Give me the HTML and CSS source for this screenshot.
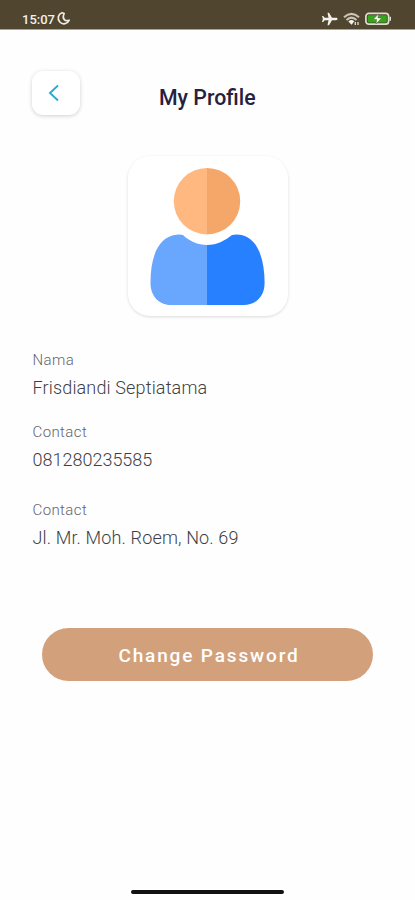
FILE: index.html
```html
<!DOCTYPE html>
<html lang="id">
<head>
  <meta charset="UTF-8" />
  <meta name="viewport" content="width=device-width, initial-scale=1.0"/>
  <title>My Profile</title>
  <link rel="stylesheet" href="styles.css">
</head>
<body>

  <div class="status-bar">
    <div class="status-left">
      <span class="time">15:07</span>
      <svg class="moon" width="15" height="15" viewBox="0 0 15 15">
        <path d="M6 1.700A5.700 5.700 0 1 0 13.200 9.200Q11 10.200 9 9.200Q6 7 8.200 2.500Z" fill="none" stroke="#eeebe3" stroke-width="1.700" stroke-linejoin="round"/>
      </svg>
    </div>
    <div class="status-right">
      <svg width="17" height="14" viewBox="0 0 17 14">
        <path d="M16.500 7c0-.8-.7-1.200-1.500-1.200h-4L8 .8H6.500l1 5H3.700L2.200 4H1l.9 3L1 10h1.200l1.500-1.800h3.800l-1 5H8l3-5h4c.8 0 1.500-.4 1.500-1.200z" fill="#f3f1ec"/>
      </svg>
      <svg width="17" height="14" viewBox="0 0 17 14">
        <path d="M1 5.200Q8.500-1.500 16 5.200M3.500 8Q8.500 3.300 13.500 8" fill="none" stroke="#c9c4b7" stroke-width="2.100"/>
        <path d="M5.300 9.400Q8.500 6.700 11.300 9.200L8.600 12.800Z" fill="#f3f1ec"/>
        <path d="M12.300 10v3M15 10v3" stroke="#d9d5ca" stroke-width="1.400"/>
      </svg>
      <svg class="battery" width="27" height="14" viewBox="0 0 27 14">
        <rect x=".9" y="1.400" width="22.700" height="10.800" rx="3" fill="#50452f" stroke="#dde0cf" stroke-width="1.700"/>
        <rect x="2.800" y="3.200" width="18.900" height="7.200" rx="1" fill="#35a51c"/>
        <path d="M24.500 4.800h1.500v4h-1.500z" fill="#dde0cf"/>
        <path d="M13.600 1.800L8.200 7.500h3.500l-.7 4.600 5.600-6.200h-3.600z" fill="#fff" stroke="#50602a" stroke-width=".5"/>
      </svg>
    </div>
  </div>

  <div class="header">
    <button class="back-btn" aria-label="Back">
      <svg width="12" height="18" viewBox="0 0 12 18">
        <path d="M10 1.500L2 9l8 7.500" fill="none" stroke="#2ba9d1" stroke-width="1.900"/>
      </svg>
    </button>
    <h1>My Profile</h1>
  </div>

  <div class="avatar">
    <svg width="116" height="138" viewBox="0 0 116 138">
      <path d="M57 0A33.200 33.200 0 0 0 57 66.400Z" fill="#ffb980"/>
      <path d="M57 0A33.200 33.200 0 0 1 57 66.400Z" fill="#f5a669"/>
      <path d="M57 77C48 77 39 73 33 67Q30 66.300 26 66.800C9 69 .5 87 .5 115C.5 130 11 137 21 137H57Z" fill="#69a7ff"/>
      <path d="M57 77C67 77 76 72 82 67Q86 66.200 90 66.800C106 69 114.600 88 114.600 115C114.600 130 104 137 94 137H57Z" fill="#2680ff"/>
    </svg>
  </div>

  <div class="details">
    <div class="field">
      <div class="label">Nama</div>
      <div class="value name">Frisdiandi Septiatama</div>
    </div>
    <div class="field phone">
      <div class="label">Contact</div>
      <div class="value">081280235585</div>
    </div>
    <div class="field">
      <div class="label">Contact</div>
      <div class="value address">Jl. Mr. Moh. Roem, No. 69</div>
    </div>
  </div>

  <button class="password-btn">Change Password</button>

  <div class="home-bar"></div>

</body>
</html>
```

FILE: styles.css
```css
* {
  box-sizing: border-box;
}

body {
  margin: 0;
  height: 900px;
  display: flex;
  flex-direction: column;
  font-family: Roboto, "Liberation Sans", sans-serif;
  background: #fefefe;
  color: #3f3e47;
}

.status-bar {
  height: 30px;
  flex-shrink: 0;
  padding: 8px 23px 0 22px;
  display: flex;
  justify-content: space-between;
  background: #50452f;
  border-bottom: 1px solid #aaa497;
}

.status-left {
  display: flex;
  gap: 1px;
}

.time {
  font-size: 13px;
  line-height: 23px;
  font-weight: 500;
  color: #f3f1ec;
}

.moon {
  margin-top: 3px;
}

.status-right {
  display: flex;
  gap: 5px;
  padding-top: 4px;
}

.header {
  display: flex;
  padding: 41px 32px 0;
}

.back-btn {
  width: 48px;
  height: 44px;
  padding: 0 5px 0 0;
  display: flex;
  align-items: center;
  justify-content: center;
  border: none;
  border-radius: 11px;
  background: #fff;
  box-shadow: 0 1px 4px rgba(0,0,0,0.18);
}

h1 {
  margin: 15px 0 0 79px;
  font-size: 21.3px;
  line-height: 24px;
  font-weight: 500;
  color: #25213f;
}

.avatar {
  width: 160px;
  height: 160px;
  margin: 41px 0 0 128px;
  padding: 12px 0 0 22px;
  border-radius: 22px;
  background: #fff;
  box-shadow: 0 1px 3px rgba(0,0,0,0.14);
}

.avatar svg {
  display: block;
}

.details {
  padding: 33px 32px 0 32.5px;
}

.field {
  height: 72px;
}

.phone {
  height: 78px;
}

.label {
  padding-top: 1px;
  font-size: 15px;
  line-height: 20px;
  font-weight: 300;
  letter-spacing: 0.4px;
  color: #66656a;
}

.value {
  margin-top: 6px;
  font-size: 18px;
  line-height: 24px;
  font-weight: 300;
}

.name,
.address {
  letter-spacing: 0.15px;
}

.password-btn {
  width: 331px;
  height: 53px;
  margin: 57px 0 0 42px;
  padding: 2px 0 0 3px;
  border: none;
  border-radius: 27px;
  background: #d2a17c;
  color: #fff;
  font-family: inherit;
  font-size: 19px;
  font-weight: 500;
  letter-spacing: 1.85px;
}

.home-bar {
  width: 153px;
  height: 4px;
  margin: auto 0 6px 131px;
  border-radius: 2px;
  background: #111;
}
```
